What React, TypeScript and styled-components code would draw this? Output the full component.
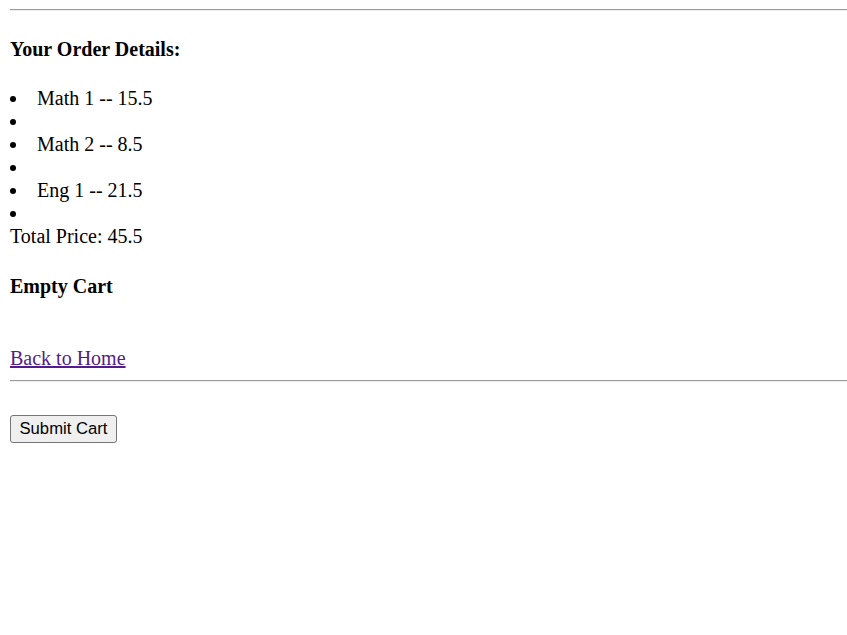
import React from "react";
import styled, { createGlobalStyle } from "styled-components";

const GlobalStyle = createGlobalStyle`
  html, body { background: #ffffff; }
  body {
    margin: 0 0 10px 10px;
    font-family: "Liberation Serif", "Times New Roman", serif;
    font-size: 20px;
    color: #000000;
  }
`;

const Rule = styled.hr<{ $top?: number }>`
  margin: ${(p) => (p.$top ?? 10)}px 0 10px 0;
  border: 0;
  border-top: 1px solid #9a9a9a;
  border-bottom: 1px solid #eeeeee;
  height: 0;
`;

const Heading = styled.h4`
  margin: 26.6px 0;
  font-size: 20px;
  font-weight: bold;
`;

const List = styled.ul`
  margin: 26.6px 0 0 0;
  padding: 0;
  list-style: disc inside;
`;

const Item = styled.li`
  line-height: 23px;
  height: 23px;
`;

const Total = styled.div`
  line-height: 23px;
`;

const Line = styled.div`
  line-height: 23px;
`;

const HomeLink = styled.a`
  color: #551a8b;
  text-decoration: underline;
`;

const SubmitButton = styled.button`
  font-family: "Liberation Sans", Arial, sans-serif;
  font-size: 16.67px;
  line-height: normal;
  padding: 3px 8.5px;
  margin: 0;
  color: #000000;
  background: #efefef;
  border: 1px solid #767676;
  border-radius: 3px;
  cursor: pointer;
`;

const items = [
  { name: "Math 1", price: 15.5 },
  { name: "Math 2", price: 8.5 },
  { name: "Eng 1", price: 21.5 },
];

export default function App() {
  const total = items.reduce((s, i) => s + i.price, 0);
  return (
    <>
      <GlobalStyle />
      <Rule $top={9} />
      <Heading>Your Order Details:</Heading>
      <List>
        {items.map((i) => (
          <React.Fragment key={i.name}>
            <Item>
              {i.name} -- {i.price}
            </Item>
            <Item />
          </React.Fragment>
        ))}
      </List>
      <Total>Total Price: {total}</Total>
      <Heading>Empty Cart</Heading>
      <Line>
        <br />
        <HomeLink href="#">Back to Home</HomeLink>
      </Line>
      <Rule />
      <Line>
        <br />
        <SubmitButton type="button">Submit Cart</SubmitButton>
      </Line>
    </>
  );
}
